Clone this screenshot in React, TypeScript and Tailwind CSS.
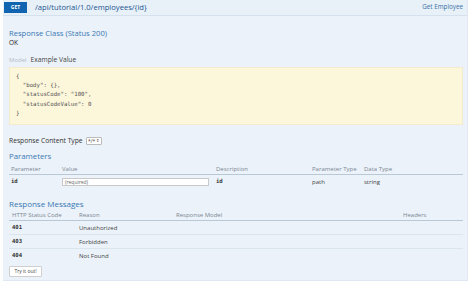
export default function App() {
  return (
    <div className="w-[474px] h-[287px] bg-white pl-[3px] pr-[6px] font-['Open_Sans',sans-serif] text-[#333]">
      <div className="h-[281px] bg-[#ebf2f9] border-r border-b border-[#dfe8f1]">
        {/* header row */}
        <div className="h-[16px] flex items-center bg-[#e8f0f8] border-b border-[#d5e2ee]">
          <span className="ml-[1px] w-[23px] h-[11px] flex items-center justify-center bg-[#1064b0] text-white text-[5px] font-bold">
            GET
          </span>
          <span className="ml-[8px] text-[7.6px] text-[#1a5490] leading-none">
            /api/tutorial/1.0/employees/{"{id}"}
          </span>
          <span className="ml-auto mr-[4px] text-[6.3px] text-[#3b72a8] leading-none">Get Employee</span>
        </div>

        <div className="pl-[6px] pr-[4px]">
          <div className="mt-[12px] h-[10px] leading-[10px] text-[7.6px] text-[#3a78b3]">Response Class (Status 200)</div>
          <div className="h-[10px] leading-[10px] text-[6.5px] text-[#222]">OK</div>

          <div className="mt-[7px] h-[10px] flex items-center gap-[4px] leading-none">
            <span className="text-[6px] text-[#b3bcc5]">Model</span>
            <span className="text-[6.7px] text-[#444]">Example Value</span>
          </div>

          <div className="mt-[2px] h-[58px] bg-[#fcf6db] border border-[#f2ebcc] pt-[4px] pl-[6px] font-['DejaVu_Sans_Mono',monospace] text-[5.7px] leading-[9.2px] text-[#555] whitespace-pre">
            <div>{"{"}</div>
            <div>{'  "body": {},'}</div>
            <div>{'  "statusCode": "100",'}</div>
            <div>{'  "statusCodeValue": 0'}</div>
            <div>{"}"}</div>
          </div>

          <div className="mt-[11px] h-[10px] flex items-center gap-[3px] leading-none">
            <span className="text-[6.7px] text-[#333]">Response Content Type</span>
            <span className="h-[8px] w-[16px] flex items-center justify-center gap-[1px] bg-white border border-[#bbb] rounded-[1px] text-[5px] text-[#444]">
              */* <span className="text-[4px]">⇕</span>
            </span>
          </div>

          <div className="mt-[5px] h-[10px] leading-[10px] text-[7.8px] text-[#3a78b3]">Parameters</div>

          <div className="mt-[3px] h-[11px] grid grid-cols-[51px_154px_96px_52px_1fr] items-center border-b border-[#b9c8d5] text-[6px] text-[#7b8794] leading-none">
            <span className="pl-[2px]">Parameter</span>
            <span className="pl-[2px]">Value</span>
            <span className="pl-[2px]">Description</span>
            <span className="pl-[2px]">Parameter Type</span>
            <span className="pl-[2px]">Data Type</span>
          </div>
          <div className="h-[14px] grid grid-cols-[51px_154px_96px_52px_1fr] items-center text-[6px] text-[#444] leading-none">
            <span className="pl-[2px] font-['DejaVu_Sans_Mono',monospace] font-bold text-[5.6px] text-[#333]">id</span>
            <span className="pl-[2px]">
              <span className="h-[8px] w-[147px] flex items-center bg-white border border-[#c9c9c9] pl-[2px] text-[5px] text-[#666]">
                (required)
              </span>
            </span>
            <span className="pl-[2px] font-['DejaVu_Sans_Mono',monospace] font-bold text-[5.6px] text-[#333]">id</span>
            <span className="pl-[2px]">path</span>
            <span className="pl-[2px]">string</span>
          </div>

          <div className="mt-[10px] h-[10px] leading-[10px] text-[8px] text-[#3a78b3]">Response Messages</div>

          <div className="mt-[1px] h-[11px] grid grid-cols-[68px_97px_227px_1fr] items-center border-b border-[#b9c8d5] text-[6px] text-[#7b8794] leading-none">
            <span className="pl-[3px]">HTTP Status Code</span>
            <span className="pl-[2px]">Reason</span>
            <span className="pl-[2px]">Response Model</span>
            <span className="pl-[2px]">Headers</span>
          </div>
          {[
            ["401", "Unauthorized"],
            ["403", "Forbidden"],
            ["404", "Not Found"],
          ].map(([code, reason], i) => (
            <div
              key={code}
              className={
                "h-[14px] grid grid-cols-[68px_97px_227px_1fr] items-center text-[6px] text-[#444] leading-none " +
                (i < 2 ? "border-b border-[#dbe5ee]" : "")
              }
            >
              <span className="pl-[3px] font-['DejaVu_Sans_Mono',monospace] font-bold text-[5.6px] text-[#333]">{code}</span>
              <span className="pl-[2px]">{reason}</span>
              <span />
              <span />
            </div>
          ))}

          <button className="mt-[3px] h-[11px] w-[33px] flex items-center justify-center bg-white border border-[#cfcfcf] rounded-[1px] text-[5px] text-[#444] leading-none">
            Try it out!
          </button>
        </div>
      </div>
    </div>
  );
}
